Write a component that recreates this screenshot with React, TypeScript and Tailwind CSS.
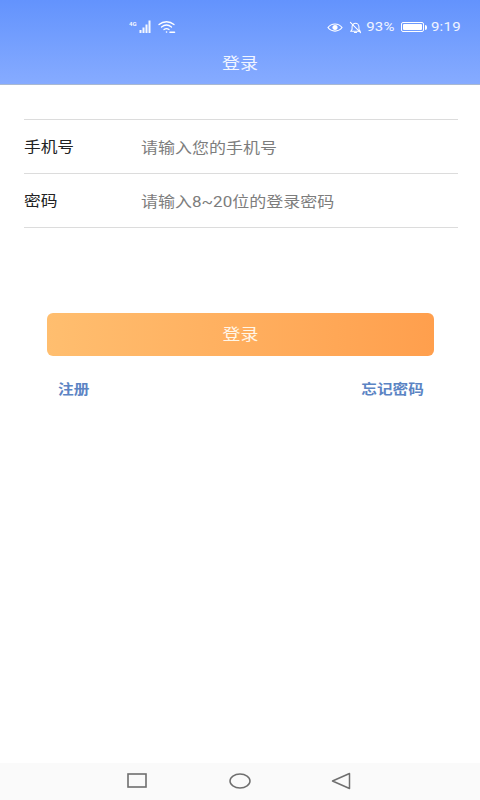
const cjk = "font-['Roboto','Noto_Sans_CJK_SC',sans-serif]";

function SignalIcon() {
  return (
    <svg width="26" height="16" viewBox="0 0 26 16" className="text-[#f4f7ff]">
      <text x="0" y="6.5" fontSize="6" fontWeight="700" fill="currentColor" fontFamily="Roboto, sans-serif">4G</text>
      <g fill="currentColor">
        <rect x="10.5" y="11" width="2" height="3" />
        <rect x="13.5" y="8.5" width="2" height="5.5" />
        <rect x="16.5" y="5.5" width="2" height="8.5" />
        <rect x="19.5" y="1.5" width="2" height="12.5" />
      </g>
    </svg>
  );
}

function WifiIcon() {
  return (
    <svg width="18" height="14" viewBox="0 0 18 14" fill="none" stroke="white" strokeWidth="1.3" strokeLinecap="round">
      <path d="M1 4.5C5.5 .8 11.5 .8 16 4.5" />
      <path d="M3.5 7C6.5 4.6 10.5 4.6 13.5 7" />
      <path d="M6 9.5C7.6 8.3 9.4 8.3 11 9.5" />
      <path d="M8.5 12h.1M12 12.2h4.5" strokeWidth="1.6" />
    </svg>
  );
}

function EyeIcon() {
  return (
    <svg width="16" height="11" viewBox="0 0 16 12" preserveAspectRatio="none" fill="none" stroke="white" strokeWidth="1.2">
      <path d="M1 6C4.5 .8 11.5 .8 15 6C11.5 11.2 4.5 11.2 1 6Z" />
      <circle cx="8" cy="6" r="2" fill="white" />
    </svg>
  );
}

function BellOffIcon() {
  return (
    <svg width="13" height="13" viewBox="0 0 14 14" fill="none" stroke="white" strokeWidth="1.1" strokeLinecap="round">
      <path d="M2 11h10l-1.3-2V6.2C10.7 4 9 2.5 7 2.5S3.3 4 3.3 6.2V9Z" />
      <path d="M5.8 12.5h2.4" />
      <path d="M1.5 1.5l11 11" />
    </svg>
  );
}

function BatteryIcon() {
  return (
    <div className="flex items-center">
      <div className="w-[23px] h-[10px] rounded-[2px] border border-white p-px">
        <div className="w-full h-full bg-white rounded-[1px]" />
      </div>
      <div className="w-[2px] h-[5px] bg-white ml-px rounded-r-sm" />
    </div>
  );
}

function Row({ label, hint }: { label: string; hint: string }) {
  return (
    <div className="h-[54px] flex items-center border-b border-[#dcdcdc] pt-[3px]">
      <span className="w-[117px] text-[16.7px] leading-none text-[#222222] scale-y-[0.88] origin-center">{label}</span>
      <span className="text-[17px] leading-none text-[#7d7d7d] scale-y-[0.88] origin-center">{hint}</span>
    </div>
  );
}

export default function App() {
  return (
    <div className={`w-[480px] h-[800px] bg-white flex flex-col ${cjk}`}>
      <header className="h-[85px] shrink-0 bg-gradient-to-b from-[#6393fd] to-[#86abff] border-b border-[#a9b9d2] flex flex-col">
        <div className="h-[54px] flex items-center text-[#f0f4ff]">
          <div className="ml-[129px] flex items-center gap-[3px]">
            <SignalIcon />
            <WifiIcon />
          </div>
          <div className="ml-auto mr-[19px] flex items-center text-[15px] tracking-[0.3px]">
            <EyeIcon />
            <span className="ml-[6px] flex"><BellOffIcon /></span>
            <span className="ml-[4px] scale-y-[0.88]">93%</span>
            <span className="ml-[6px]"><BatteryIcon /></span>
            <span className="ml-[4px] scale-y-[0.88]">9:19</span>
          </div>
        </div>
        <div className="text-center leading-[20px]">
          <span className="inline-block text-[18px] leading-[20px] text-[#f1f5ff] scale-y-[0.88]">登录</span>
        </div>
      </header>

      <main className="flex-1 flex flex-col">
        <div className="mx-6 mt-[34px] border-t border-[#dcdcdc] w-[434px]">
          <Row label="手机号" hint="请输入您的手机号" />
          <Row label="密码" hint="请输入8~20位的登录密码" />
        </div>

        <button className="mt-[85px] ml-[47px] w-[387px] h-[43px] rounded-[6px] bg-gradient-to-r from-[#ffbe6f] to-[#ff9f4d] text-[#fff6e8] pt-[2px]">
          <span className="inline-block text-[18px] leading-[20px] scale-y-[0.88]">登录</span>
        </button>

        <div className="mt-[25px] ml-[58px] mr-[56px] flex justify-between text-[15.7px] font-semibold text-[#5b84c4] leading-[18px]">
          <span className="scale-y-[0.85]">注册</span>
          <span className="scale-y-[0.85]">忘记密码</span>
        </div>
      </main>

      <nav className="h-[37px] shrink-0 bg-[#fafafa] flex items-center pb-[2px]">
        <svg width="20" height="15" viewBox="0 0 20 15" className="ml-[127px]" fill="none" stroke="#6f6f6f" strokeWidth="1.6">
          <rect x="1" y="1" width="18" height="13" />
        </svg>
        <svg width="22" height="16" viewBox="0 0 22 16" className="ml-[82px]" fill="none" stroke="#6f6f6f" strokeWidth="1.5">
          <ellipse cx="11" cy="8" rx="10" ry="7" />
        </svg>
        <svg width="20" height="18" viewBox="0 0 20 18" className="ml-[80px]" fill="none" stroke="#6f6f6f" strokeWidth="1.5" strokeLinejoin="round">
          <path d="M1.5 9L18.5 1.5V16.5Z" />
        </svg>
      </nav>
    </div>
  );
}
